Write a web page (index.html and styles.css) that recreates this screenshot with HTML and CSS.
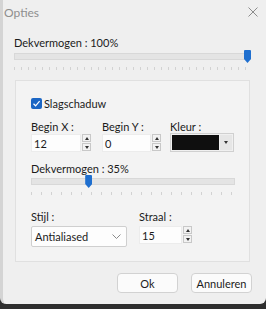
FILE: index.html
```html
<!DOCTYPE html>
<html lang="nl">
<head>
    <meta charset="UTF-8">
    <meta name="viewport" content="width=device-width, initial-scale=1.0">
    <title>Opties</title>
    <link rel="stylesheet" href="styles.css">
</head>
<body>
<div class="dialog">
    <div class="titlebar">
        <span class="title">Opties</span>
        <svg class="close" width="10" height="10" viewBox="0 0 10 10">
            <path d="M0.5 0.5 L9.5 9.5 M9.5 0.5 L0.5 9.5" stroke="#8c8c8c" stroke-width="1" fill="none"/>
        </svg>
    </div>

    <div class="content">
        <div class="label">Dekvermogen : 100%</div>
        <div class="slider wide">
            <div class="track"></div>
            <div class="thumb" style="left: 100%"></div>
        </div>
        <div class="ticks wide-ticks"></div>

        <div class="group">
            <label class="check">
                <span class="box">
                    <svg width="9" height="9" viewBox="0 0 9 9">
                        <path d="M1.5 4.8 L3.6 6.8 L7.6 2.2" stroke="#fff" stroke-width="1.2" fill="none"/>
                    </svg>
                </span>
                Slagschaduw
            </label>

            <div class="row">
                <div class="col col-x">
                    <div class="label">Begin X :</div>
                    <div class="spin">
                        <div class="field">12</div>
                        <div class="arrows">
                            <span class="arrow up"></span>
                            <span class="arrow down"></span>
                        </div>
                    </div>
                </div>
                <div class="col col-y">
                    <div class="label">Begin Y :</div>
                    <div class="spin">
                        <div class="field">0</div>
                        <div class="arrows">
                            <span class="arrow up"></span>
                            <span class="arrow down"></span>
                        </div>
                    </div>
                </div>
                <div class="col">
                    <div class="label">Kleur :</div>
                    <div class="color">
                        <div class="swatch"></div>
                        <div class="drop"><span class="tri"></span></div>
                    </div>
                </div>
            </div>

            <div class="label opacity">Dekvermogen : 35%</div>
            <div class="slider narrow">
                <div class="track"></div>
                <div class="thumb" style="left: 30%"></div>
            </div>
            <div class="ticks narrow-ticks"></div>

            <div class="row bottom-row">
                <div class="col col-style">
                    <div class="label">Stijl :</div>
                    <div class="select">
                        <span>Antialiased</span>
                        <svg width="9" height="5" viewBox="0 0 9 5">
                            <path d="M0.5 0.5 L4.5 4.5 L8.5 0.5" stroke="#8a8a8a" stroke-width="1" fill="none"/>
                        </svg>
                    </div>
                </div>
                <div class="col">
                    <div class="label">Straal :</div>
                    <div class="spin">
                        <div class="field radius">15</div>
                        <div class="arrows">
                            <span class="arrow up"></span>
                            <span class="arrow down"></span>
                        </div>
                    </div>
                </div>
            </div>
        </div>

        <div class="buttons">
            <button type="button">Ok</button>
            <button type="button">Annuleren</button>
        </div>
    </div>
</div>
</body>
</html>
```

FILE: styles.css
```css
* {
    box-sizing: border-box;
}

body {
    margin: 0;
    padding: 0;
    width: 266px;
    height: 309px;
    background-color: #2e2e2e;
    font-family: Lato, 'Noto Sans', Arial, sans-serif;
    font-size: 11px;
    color: #1b1b1b;
    overflow: hidden;
}

.dialog {
    width: 266px;
    height: 304px;
    background-color: #efefef;
    border-left: 3px solid #d4d4d4;
    border-radius: 0 0 6px 6px;
}

.titlebar {
    height: 28px;
    display: flex;
    align-items: center;
    justify-content: space-between;
    padding: 0 8px 4px 1px;
}

.title {
    color: #8e8e8e;
    font-size: 12px;
}

.content {
    padding: 7px 0 0 11px;
}

.label {
    height: 16px;
    line-height: 16px;
    white-space: nowrap;
}

.slider {
    position: relative;
    height: 14px;
    margin-top: -1px;
}

.slider.wide {
    width: 237px;
}

.slider.narrow {
    width: 204px;
}

.track {
    position: absolute;
    left: 0;
    right: 0;
    top: 3px;
    height: 7px;
    background-color: #e4e4e4;
    border: 1px solid #d8d8d8;
}

.thumb {
    position: absolute;
    top: 0;
    width: 7px;
    height: 13px;
    margin-left: -7px;
    background-color: #1f6fcf;
    border-radius: 1px 1px 0 0;
    clip-path: polygon(0 0, 100% 0, 100% 70%, 50% 100%, 0 70%);
}

.ticks {
    height: 3px;
    margin-top: 3px;
}

.wide-ticks {
    width: 237px;
    background: repeating-linear-gradient(to right, #d2d2d2 0, #d2d2d2 1px, transparent 1px, transparent 7px);
}

.narrow-ticks {
    width: 204px;
    background: repeating-linear-gradient(to right, #d2d2d2 0, #d2d2d2 1px, transparent 1px, transparent 10px);
}

.group {
    margin-top: 10px;
    margin-left: 1px;
    width: 235px;
    height: 182px;
    border: 1px solid #e0e0e0;
    background-color: #f3f3f3;
    padding: 16px 0 0 15px;
}

.check {
    display: flex;
    align-items: center;
    gap: 2px;
    height: 12px;
}

.box {
    width: 11px;
    height: 11px;
    background-color: #1b66c4;
    border-radius: 2px;
    display: flex;
    align-items: center;
    justify-content: center;
}

.row {
    display: flex;
    margin-top: 10px;
}

.col-x {
    width: 71px;
}

.col-y {
    width: 68px;
}

.col-style {
    width: 108px;
}

.spin {
    display: flex;
    align-items: center;
    height: 19px;
    margin-top: -2px;
}

.field {
    width: 50px;
    height: 18px;
    line-height: 17px;
    padding-left: 2px;
    background-color: #fdfdfd;
    border: 1px solid #ececec;
}

.col-y .field {
    width: 49px;
}

.field.radius {
    width: 43px;
}

.arrows {
    display: flex;
    flex-direction: column;
    gap: 1px;
    margin-left: 1px;
}

.arrow {
    width: 9px;
    height: 8px;
    background-color: #f2f2f2;
    border: 1px solid #c8c8c8;
    display: flex;
    align-items: center;
    justify-content: center;
}

.arrow::after {
    content: "";
    border-left: 2px solid transparent;
    border-right: 2px solid transparent;
}

.arrow.up::after {
    border-bottom: 3px solid #333;
}

.arrow.down::after {
    border-top: 3px solid #333;
}

.color {
    display: flex;
    align-items: center;
    width: 64px;
    height: 19px;
    border: 1px solid #d0d0d0;
    background-color: #f0f0f0;
    padding: 1px;
    margin-top: -2px;
}

.swatch {
    width: 48px;
    height: 15px;
    background-color: #0f0f0f;
}

.drop {
    width: 12px;
    height: 15px;
    margin-left: 1px;
    background-color: #e6e6e6;
    display: flex;
    align-items: center;
    justify-content: center;
}

.tri {
    border-left: 2px solid transparent;
    border-right: 2px solid transparent;
    border-top: 3px solid #333;
}

.opacity {
    margin-top: 9px;
}

.group .slider {
    margin-top: -2px;
}

.bottom-row {
    margin-top: 14px;
}

.select {
    display: flex;
    align-items: center;
    justify-content: space-between;
    width: 96px;
    height: 21px;
    margin-top: 1px;
    padding: 0 5px 0 3px;
    background-color: #fdfdfd;
    border: 1px solid #cfcfcf;
    border-radius: 2px;
}

.bottom-row .spin {
    margin-top: 0;
}

.buttons {
    display: flex;
    gap: 13px;
    margin: 11px 0 0 103px;
}

.buttons button {
    width: 61px;
    height: 20px;
    padding: 0;
    font-family: inherit;
    font-size: 11px;
    color: #1b1b1b;
    background-color: #fbfbfb;
    border: 1px solid #d2d2d2;
    border-radius: 4px;
}
```
